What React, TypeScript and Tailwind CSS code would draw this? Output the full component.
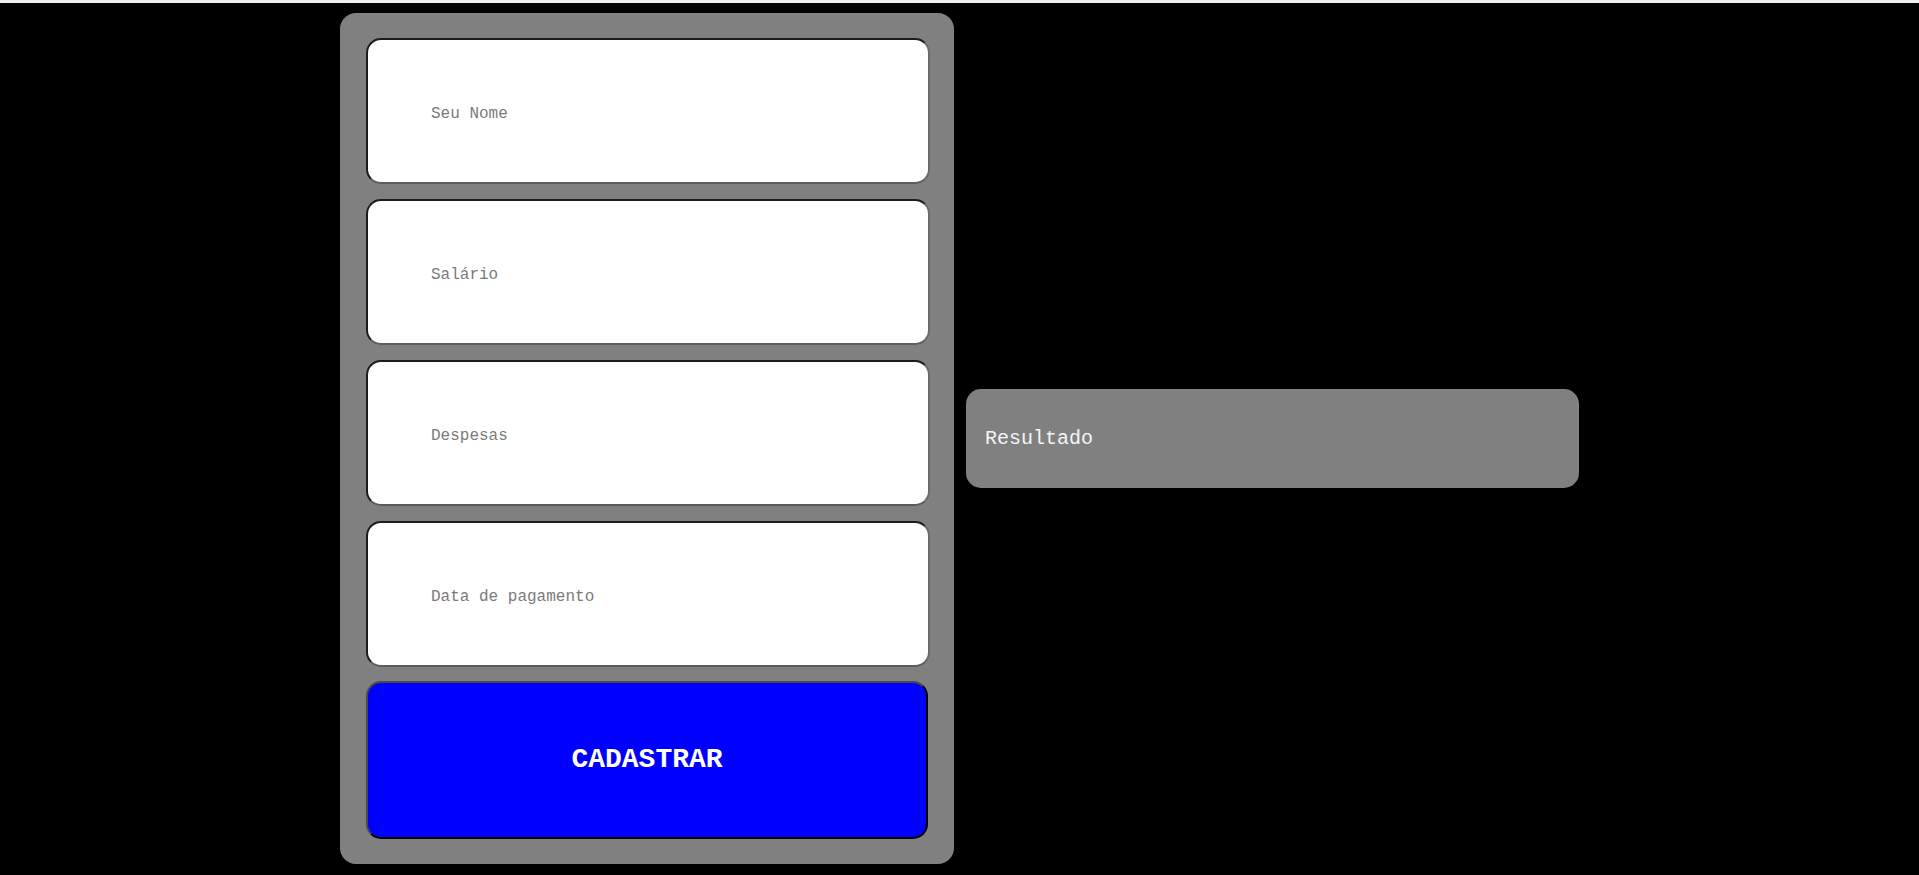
import React from "react";

const mono = { fontFamily: '"Liberation Mono", "Courier New", monospace' };

function Field({ placeholder }: { placeholder: string }) {
  return (
    <input
      type="text"
      placeholder={placeholder}
      style={mono}
      className="block w-[564px] h-[146px] rounded-[15px] bg-white border-2 border-t-[#1c1c1c] border-l-[#1c1c1c] border-b-[#5c5c5c] border-r-[#6a6a6a] pl-[63px] pt-[5px] text-[16px] text-black placeholder:text-[#7a7a7a] outline-none"
    />
  );
}

export default function App() {
  return (
    <div className="min-h-[875px] bg-black" style={mono}>
      <div className="h-[3px] bg-[#eeeeee]" />
      <div className="flex items-center pl-[340px] pt-[10px]">
        <div className="w-[614px] rounded-[16px] bg-[#808080] pt-[25px] pl-[26px] pr-[24px] pb-[25px] flex flex-col">
          <div className="flex flex-col gap-[15px]">
            <Field placeholder="Seu Nome" />
            <Field placeholder="Salário" />
            <Field placeholder="Despesas" />
            <Field placeholder="Data de pagamento" />
          </div>
          <button
            type="button"
            style={mono}
            className="mt-[14px] w-[562px] h-[158px] rounded-[15px] bg-[#0000ff] border-2 border-t-[#4a4a4a] border-l-[#4a4a4a] border-b-[#000000] border-r-[#000000] text-white font-bold text-[28px]"
          >
            CADASTRAR
          </button>
        </div>
        <div className="ml-[12px] w-[613px] h-[99px] rounded-[15px] bg-[#808080] flex items-center px-[19px]">
          <span className="text-[20px] text-[#f5f5f5]">Resultado</span>
        </div>
      </div>
    </div>
  );
}
